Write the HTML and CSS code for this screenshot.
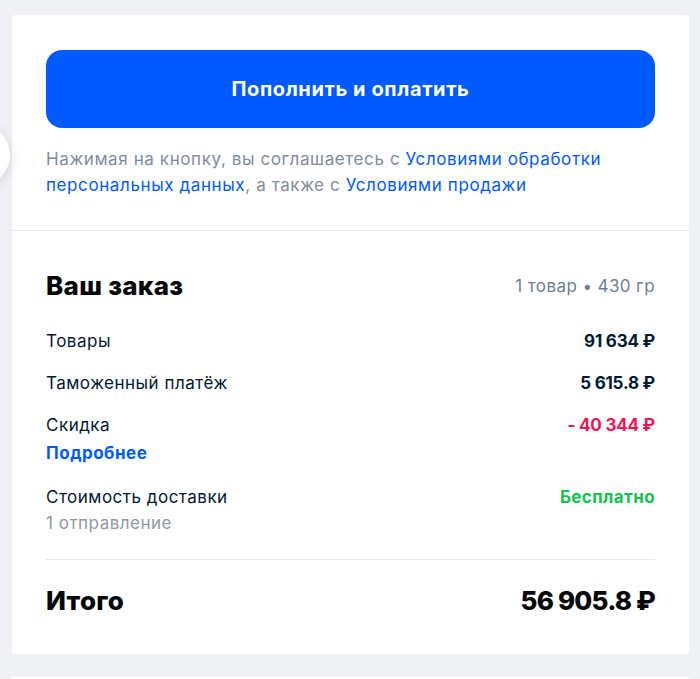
FILE: index.html
```html
<!DOCTYPE html>
<html lang="ru">
<head>
<meta charset="utf-8">
<link rel="stylesheet" href="styles.css">
</head>
<body>
<div class="side-bubble"></div>
<main class="page">
  <section class="card">
    <div class="pay">
      <button class="pay-btn">Пополнить и оплатить</button>
      <p class="terms">Нажимая на кнопку, вы соглашаетесь с <a class="link">Условиями обработки персональных данных</a>, а также с <a class="link">Условиями продажи</a></p>
    </div>
    <div class="order">
      <div class="order-head">
        <h2 class="title">Ваш заказ</h2>
        <span class="meta">1 товар • 430 гр</span>
      </div>
      <div class="row">
        <span class="label">Товары</span>
        <span class="value">91 634 ₽</span>
      </div>
      <div class="row">
        <span class="label">Таможенный платёж</span>
        <span class="value">5 615.8 ₽</span>
      </div>
      <div class="row">
        <div class="label-col">
          <span class="label">Скидка</span>
          <a class="more">Подробнее</a>
        </div>
        <span class="value red">- 40 344 ₽</span>
      </div>
      <div class="row">
        <div class="label-col">
          <span class="label">Стоимость доставки</span>
          <span class="sub">1 отправление</span>
        </div>
        <span class="value green">Бесплатно</span>
      </div>
      <div class="total">
        <span class="total-label">Итого</span>
        <span class="total-value">56 905.8 ₽</span>
      </div>
    </div>
  </section>
  <section class="card next"></section>
</main>
</body>
</html>
```

FILE: styles.css
```css
* { box-sizing: border-box; }
html, body { margin: 0; padding: 0; }
body {
  background: #f0f1f4;
  font-family: "Inter", "Noto Sans", sans-serif;
  color: #001a34;
  overflow: hidden;
  height: 679px;
  position: relative;
}
.side-bubble {
  position: absolute;
  left: -52px;
  top: 124px;
  width: 62px;
  height: 62px;
  border-radius: 50%;
  background: #fff;
  box-shadow: 0 2px 12px rgba(0, 26, 52, 0.14);
}
.page {
  padding: 15px 11px 0 12px;
  display: flex;
  flex-direction: column;
  gap: 23px;
}
.card {
  background: #fff;
  border-radius: 4px;
}
.pay {
  padding: 35px 34px 32px;
  border-bottom: 1px solid #e5e7ec;
}
.pay-btn {
  display: block;
  width: 100%;
  height: 78px;
  border: 0;
  border-radius: 16px;
  background: #005bff;
  color: #fff;
  font-family: inherit;
  font-size: 20px;
  font-weight: 700;
  letter-spacing: 0.6px;
}
.terms {
  margin: 18px 0 0;
  font-size: 17px;
  line-height: 26px;
  letter-spacing: 0.6px;
  color: #808d9a;
}
.link { color: #005bff; }
.order {
  padding: 37px 34px 37px;
  display: flex;
  flex-direction: column;
}
.order-head {
  display: flex;
  justify-content: space-between;
  align-items: center;
  margin-bottom: 24px;
}
.title {
  margin: 0;
  font-size: 26px;
  line-height: 36px;
  font-weight: 800;
  color: #070707;
  letter-spacing: 0.3px;
}
.meta {
  font-size: 17px;
  letter-spacing: 0.4px;
  color: #707f8d;
}
.row {
  display: flex;
  justify-content: space-between;
  align-items: flex-start;
  font-size: 17px;
  line-height: 26px;
  letter-spacing: 0.5px;
  margin-bottom: 16px;
}
.label-col {
  display: flex;
  flex-direction: column;
}
.more {
  color: #005bff;
  font-weight: 700;
  line-height: 30px;
}
.sub { color: #8e99a4; }
.value {
  font-weight: 700;
  letter-spacing: -0.2px;
}
.red { color: #f91155; }
.green { color: #10c44c; letter-spacing: 0.4px; }
.total {
  border-top: 1px solid #e5e7ec;
  margin-top: 7px;
  padding-top: 25px;
  display: flex;
  justify-content: space-between;
  align-items: center;
  color: #070707;
  font-weight: 800;
  font-size: 26px;
  line-height: 32px;
}
.total-label { letter-spacing: 0.3px; }
.total-value { letter-spacing: -0.8px; }
.next { height: 2px; border-radius: 4px 4px 0 0; }
```
